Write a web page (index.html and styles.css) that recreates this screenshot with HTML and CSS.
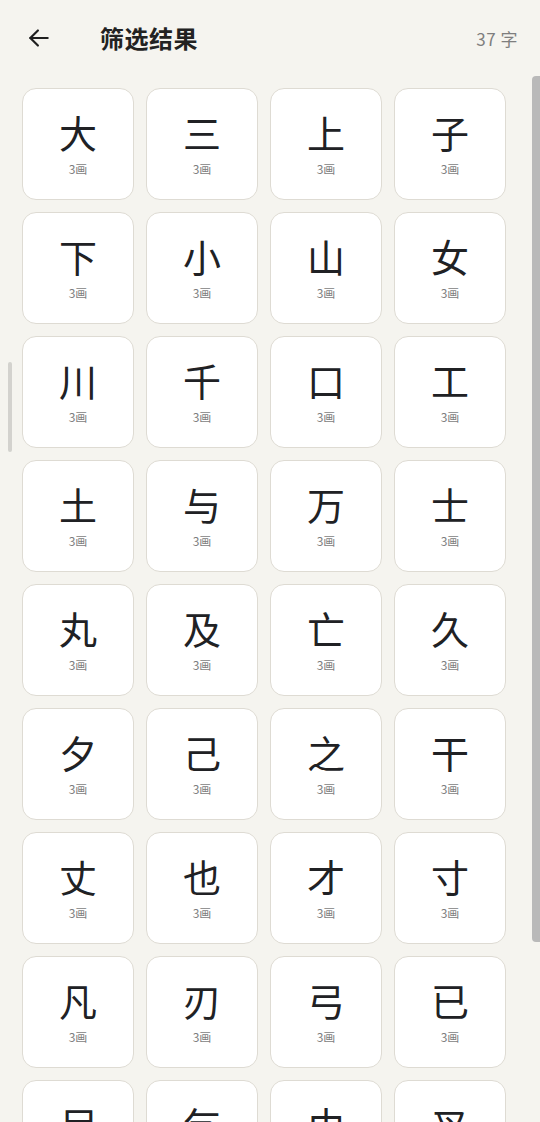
FILE: index.html
```html
<!DOCTYPE html>
<html lang="zh">
<head>
<meta charset="utf-8">
<link rel="stylesheet" href="styles.css">
</head>
<body>
<div class="app">
  <header class="bar">
    <button class="back" aria-label="返回">
      <svg width="26" height="26" viewBox="0 0 24 24" fill="none" stroke="#1f1f1f" stroke-width="2" stroke-linecap="round" stroke-linejoin="round"><path d="M20 12H4"/><path d="M11 5l-7 7 7 7"/></svg>
    </button>
    <h1 class="title">筛选结果</h1>
    <span class="count">37 字</span>
  </header>
  <main class="list">
    <div class="grid">
      <div class="card"><span class="ch">大</span><span class="st">3画</span></div>
      <div class="card"><span class="ch">三</span><span class="st">3画</span></div>
      <div class="card"><span class="ch">上</span><span class="st">3画</span></div>
      <div class="card"><span class="ch">子</span><span class="st">3画</span></div>
      <div class="card"><span class="ch">下</span><span class="st">3画</span></div>
      <div class="card"><span class="ch">小</span><span class="st">3画</span></div>
      <div class="card"><span class="ch">山</span><span class="st">3画</span></div>
      <div class="card"><span class="ch">女</span><span class="st">3画</span></div>
      <div class="card"><span class="ch">川</span><span class="st">3画</span></div>
      <div class="card"><span class="ch">千</span><span class="st">3画</span></div>
      <div class="card"><span class="ch">口</span><span class="st">3画</span></div>
      <div class="card"><span class="ch">工</span><span class="st">3画</span></div>
      <div class="card"><span class="ch">土</span><span class="st">3画</span></div>
      <div class="card"><span class="ch">与</span><span class="st">3画</span></div>
      <div class="card"><span class="ch">万</span><span class="st">3画</span></div>
      <div class="card"><span class="ch">士</span><span class="st">3画</span></div>
      <div class="card"><span class="ch">丸</span><span class="st">3画</span></div>
      <div class="card"><span class="ch">及</span><span class="st">3画</span></div>
      <div class="card"><span class="ch">亡</span><span class="st">3画</span></div>
      <div class="card"><span class="ch">久</span><span class="st">3画</span></div>
      <div class="card"><span class="ch">夕</span><span class="st">3画</span></div>
      <div class="card"><span class="ch">己</span><span class="st">3画</span></div>
      <div class="card"><span class="ch">之</span><span class="st">3画</span></div>
      <div class="card"><span class="ch">干</span><span class="st">3画</span></div>
      <div class="card"><span class="ch">丈</span><span class="st">3画</span></div>
      <div class="card"><span class="ch">也</span><span class="st">3画</span></div>
      <div class="card"><span class="ch">才</span><span class="st">3画</span></div>
      <div class="card"><span class="ch">寸</span><span class="st">3画</span></div>
      <div class="card"><span class="ch">凡</span><span class="st">3画</span></div>
      <div class="card"><span class="ch">刃</span><span class="st">3画</span></div>
      <div class="card"><span class="ch">弓</span><span class="st">3画</span></div>
      <div class="card"><span class="ch">已</span><span class="st">3画</span></div>
      <div class="card"><span class="ch">尸</span><span class="st">3画</span></div>
      <div class="card"><span class="ch">乞</span><span class="st">3画</span></div>
      <div class="card"><span class="ch">巾</span><span class="st">3画</span></div>
      <div class="card"><span class="ch">叉</span><span class="st">3画</span></div>
      <div class="card"><span class="ch">义</span><span class="st">3画</span></div>
    </div>
    <div class="thumb"></div>
  </main>
  <div class="edge-thumb"></div>
</div>
</body>
</html>
```

FILE: styles.css
```css
* { box-sizing: border-box; }
html, body {
  margin: 0;
  padding: 0;
  background: #f5f4ef;
  font-family: "Noto Sans CJK SC", "Noto Sans", sans-serif;
  color: #1f1f1f;
}
.app {
  position: relative;
  width: 540px;
  height: 1122px;
  overflow: hidden;
}
.bar {
  height: 76px;
  display: flex;
  align-items: center;
  padding: 0 22px 0 24px;
}
.back {
  width: 30px;
  height: 30px;
  padding: 0;
  border: 0;
  background: none;
  display: flex;
  align-items: center;
  justify-content: center;
}
.title {
  margin: 0 0 0 46px;
  font-size: 24px;
  font-weight: 700;
  letter-spacing: 0.5px;
  color: #222;
  flex: 1;
  line-height: 1;
}
.count {
  font-size: 17px;
  color: #7e7e7e;
  letter-spacing: 0.5px;
}
.list {
  position: relative;
  height: 1046px;
  padding: 12px 0 0 22px;
}
.grid {
  display: grid;
  grid-template-columns: repeat(4, 112px);
  grid-auto-rows: 112px;
  gap: 12px;
}
.card {
  background: #fff;
  border: 1px solid #dedbd3;
  border-radius: 14px;
  display: flex;
  flex-direction: column;
  align-items: center;
  padding-top: 23px;
}
.ch {
  font-size: 38px;
  line-height: 40px;
  height: 40px;
  color: #202124;
}
.st {
  font-size: 12px;
  line-height: 14px;
  color: #7d7d7d;
  margin-top: 10px;
}
.thumb {
  position: absolute;
  right: 0;
  top: 0;
  width: 8px;
  height: 866px;
  background: #b9b9b9;
  border-radius: 4px 0 0 4px;
}
.edge-thumb {
  position: absolute;
  left: 8px;
  top: 362px;
  width: 4px;
  height: 90px;
  background: #d3d2ce;
  border-radius: 2px;
}
```
